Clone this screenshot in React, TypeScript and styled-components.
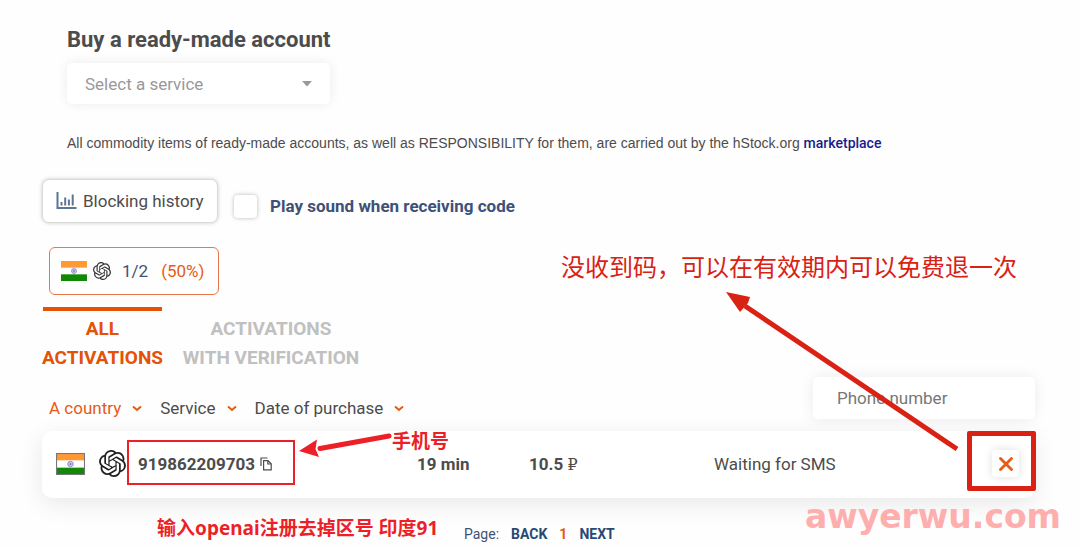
import React from "react";
import styled, { createGlobalStyle } from "styled-components";
import { SiOpenai } from "react-icons/si";

const orange = "#e65a14";
const ink = "#4c4c4c";
const navy = "#3f5176";
const red = "#ed1f27";
const deepRed = "#d92114";

const GlobalStyle = createGlobalStyle`
  *, *::before, *::after { box-sizing: border-box; }
  body { margin: 0; background: #fefefe; }
  body, button, input, select {
    font-family: Roboto, "Noto Sans CJK SC", sans-serif;
    color: ${ink};
  }
  button, input, select { font-size: 17px; }
  button { cursor: pointer; }
`;

const Page = styled.main`
  position: relative;
  padding: 24px 45px 0 42px;
  overflow: hidden;
`;

const Shop = styled.section`
  padding-left: 25px;
`;

const Title = styled.h1`
  margin: 0 0 8px;
  font-size: 22px;
  line-height: 31px;
  font-weight: 700;
`;

const SelectWrap = styled.div`
  display: grid;
  width: 263px;
  align-items: center;
  background: #fff;
  border-radius: 5px;
  box-shadow: 0 0 12px rgba(0, 0, 0, 0.08);
  > * { grid-area: 1 / 1; }
  svg { justify-self: end; margin-right: 18px; pointer-events: none; }
`;

const ServiceSelect = styled.select`
  appearance: none;
  width: 100%;
  height: 41px;
  padding: 0 18px;
  border: 0;
  background: transparent;
  color: #999;
`;

const Notice = styled.p`
  margin: 28px 0 0;
  font-family: "Liberation Sans", sans-serif;
  font-size: 14px;
  line-height: 22px;
`;

const MarketLink = styled.a`
  color: #1b1b8e;
  font-family: Roboto, sans-serif;
  font-weight: 500;
  text-decoration: none;
`;

const Toolbar = styled.div`
  display: flex;
  align-items: center;
  gap: 16px;
  margin-top: 25px;
`;

const HistoryButton = styled.button`
  display: flex;
  align-items: center;
  gap: 6px;
  width: 176px;
  height: 44px;
  padding: 0 13px;
  border: 1px solid #d9d9d9;
  border-radius: 7px;
  background: #fff;
  box-shadow: 0 0 4px rgba(0, 0, 0, 0.2);
  white-space: nowrap;
`;

const SoundLabel = styled.label`
  display: flex;
  align-items: center;
  gap: 13px;
  padding-top: 10px;
  color: ${navy};
  font-size: 17px;
  font-weight: 700;
`;

const Checkbox = styled.input`
  appearance: none;
  width: 23px;
  height: 23px;
  margin: 0;
  border-radius: 4px;
  background: #fff;
  box-shadow: 0 0 4px rgba(0, 0, 0, 0.28);
`;

const StatBadge = styled.div`
  display: flex;
  align-items: center;
  gap: 6px;
  width: 170px;
  height: 48px;
  margin: 24px 0 0 7px;
  padding: 0 11px;
  border: 1px solid #e9774a;
  border-radius: 6px;
  color: ${navy};
  font-size: 17px;
`;

const Ratio = styled.span`
  padding: 0 7px 0 5px;
`;

const Percent = styled.span`
  color: ${orange};
`;

const Tabs = styled.nav`
  display: flex;
  gap: 21px;
  margin: 12px 0 0 1px;
`;

const Tab = styled.button<{ $active?: boolean; $width: number }>`
  display: flex;
  flex-direction: column;
  align-items: center;
  width: ${(p) => p.$width}px;
  padding: 3px 0 0;
  border: 0;
  border-top: 4px solid ${(p) => (p.$active ? "#e35205" : "transparent")};
  background: none;
  color: ${(p) => (p.$active ? "#e35205" : "#c0c0c0")};
  font-size: 19px;
  line-height: 29px;
  font-weight: 700;
  white-space: nowrap;
`;

const Filters = styled.div`
  display: flex;
  align-items: flex-end;
  margin-top: 5px;
  padding-left: 7px;
`;

const Sort = styled.button<{ $active?: boolean }>`
  display: flex;
  align-items: center;
  gap: 11px;
  margin-right: 18px;
  padding: 0;
  border: 0;
  background: none;
  color: ${(p) => (p.$active ? orange : ink)};
  line-height: 22px;
  white-space: nowrap;
`;

const PhoneInput = styled.input`
  width: 222px;
  height: 42px;
  margin-left: auto;
  padding: 0 24px;
  border: 0;
  border-radius: 5px;
  background: #fff;
  box-shadow: 0 0 14px rgba(0, 0, 0, 0.08);
  &::placeholder { color: #777; }
`;

const Activations = styled.table`
  width: 100%;
  margin-top: 12px;
  border-collapse: collapse;
  table-layout: fixed;
  border-radius: 10px;
  background: #fff;
  box-shadow: 0 6px 24px rgba(0, 0, 0, 0.09);
`;

const Cell = styled.td<{ $width?: number; $bold?: boolean }>`
  width: ${(p) => (p.$width ? `${p.$width}px` : "auto")};
  height: 67px;
  padding: 0 0 2px;
  font-size: 17px;
  font-weight: ${(p) => (p.$bold ? 700 : 400)};
`;

const Account = styled.div`
  display: flex;
  align-items: center;
  gap: 14px;
  padding-left: 14px;
`;

const NumberGroup = styled.span`
  display: flex;
  align-items: center;
  gap: 5px;
  margin-left: -2px;
`;

const IconButton = styled.button`
  display: flex;
  padding: 0;
  border: 0;
  background: none;
`;

const Ruble = styled.span`
  font-family: "DejaVu Serif", serif;
  font-size: 16px;
  font-weight: 400;
`;

const CancelButton = styled.button`
  display: grid;
  place-items: center;
  width: 27px;
  height: 27px;
  margin-left: 16px;
  padding: 0;
  border: 0;
  border-radius: 4px;
  background: #fff;
  box-shadow: 0 0 10px rgba(0, 0, 0, 0.13);
`;

const Pager = styled.nav`
  display: flex;
  align-items: center;
  gap: 12px;
  margin-top: 25px;
  padding-left: 422px;
  font-size: 14px;
  line-height: 22px;
  color: ${navy};
`;

const PagerLink = styled.a<{ $current?: boolean }>`
  color: ${(p) => (p.$current ? orange : "#284a72")};
  font-weight: 700;
  text-decoration: none;
`;

const Note = styled.p<{ $top: number; $left?: number; $right?: number; $large?: boolean }>`
  position: absolute;
  top: ${(p) => p.$top}px;
  left: ${(p) => (p.$left === undefined ? "auto" : `${p.$left}px`)};
  right: ${(p) => (p.$right === undefined ? "auto" : `${p.$right}px`)};
  margin: 0;
  font-family: "Noto Sans", "Noto Sans CJK SC", sans-serif;
  font-size: ${(p) => (p.$large ? 24 : 19)}px;
  line-height: 28px;
  font-weight: ${(p) => (p.$large ? 400 : 700)};
  color: ${(p) => (p.$large ? deepRed : red)};
  white-space: nowrap;
`;

const PhoneFrame = styled.div`
  position: absolute;
  top: 440px;
  left: 127px;
  width: 168px;
  height: 45px;
  border: 2px solid ${red};
  pointer-events: none;
`;

const CancelFrame = styled.div`
  position: absolute;
  top: 431px;
  right: 44px;
  width: 69px;
  height: 60px;
  border: 5px solid ${deepRed};
  border-radius: 2px;
  pointer-events: none;
`;

const PhoneArrow = styled.svg`
  position: absolute;
  top: 430px;
  left: 298px;
  pointer-events: none;
`;

const CancelArrow = styled.svg`
  position: absolute;
  top: 288px;
  right: 115px;
  pointer-events: none;
`;

const Watermark = styled.div`
  position: absolute;
  top: 497px;
  right: 19px;
  color: #ffaeae;
  font-family: "DejaVu Sans", sans-serif;
  font-size: 33px;
  line-height: 40px;
  font-weight: 700;
`;

const Flag = ({ width, height, outlined }: { width: number; height: number; outlined?: boolean }) => (
  <svg width={width} height={height} viewBox="0 0 27 21" preserveAspectRatio="none" role="img" aria-label="India">
    <rect width="27" height="21" fill="#fff" />
    <rect width="27" height="7" fill="#ff9933" />
    <rect y="14" width="27" height="7" fill="#128807" />
    <circle cx="13.5" cy="10.5" r="2.6" fill="#c9c9ea" stroke="#7474c4" strokeWidth="0.7" />
    <circle cx="13.5" cy="10.5" r="0.8" fill="#5555b0" />
    {outlined && <rect x="0.5" y="0.5" width="26" height="20" fill="none" stroke="#777" />}
  </svg>
);

const ChartIcon = () => (
  <svg width="21" height="18" viewBox="0 0 21 18" fill="none" stroke="#5c7595" aria-hidden="true">
    <path d="M1.5 0V16H20.5" strokeWidth="2" />
    <path d="M5.5 13.5V10M9.2 13.5V5.5M12.9 13.5V7.5M16.7 13.5V2.5" strokeWidth="2" />
  </svg>
);

const Chevron = () => (
  <svg width="10" height="7" viewBox="0 0 10 7" fill="none" stroke={orange} strokeWidth="2" aria-hidden="true">
    <path d="M1 1.5 5 5 9 1.5" />
  </svg>
);

const CopyIcon = () => (
  <svg width="12" height="14" viewBox="0 0 12 14" fill="none" stroke="#4c4c4c" strokeWidth="1.2" aria-hidden="true">
    <path d="M1 9V1H7.5" />
    <path d="M3.6 3.6H8L11.2 6.8V12.8H3.6ZM7.8 3.6V7H11.2" />
  </svg>
);

export default function App() {
  return (
    <>
      <GlobalStyle />
      <Page>
        <Shop>
          <Title>Buy a ready-made account</Title>
          <SelectWrap>
            <ServiceSelect aria-label="Service">
              <option>Select a service</option>
            </ServiceSelect>
            <svg width="10" height="6" viewBox="0 0 10 6" aria-hidden="true">
              <path d="M0 0H10L5 5.5Z" fill="#999" />
            </svg>
          </SelectWrap>
          <Notice>
            All commodity items of ready-made accounts, as well as RESPONSIBILITY for them, are carried out by the
            hStock.org <MarketLink href="#marketplace">marketplace</MarketLink>
          </Notice>
        </Shop>

        <Toolbar>
          <HistoryButton type="button">
            <ChartIcon />
            Blocking history
          </HistoryButton>
          <SoundLabel>
            <Checkbox type="checkbox" />
            Play sound when receiving code
          </SoundLabel>
        </Toolbar>

        <StatBadge>
          <Flag width={26} height={20} />
          <SiOpenai size={18} color="#333" />
          <Ratio>1/2</Ratio>
          <Percent>(50%)</Percent>
        </StatBadge>

        <Tabs>
          <Tab type="button" $active $width={119}>
            <span>ALL</span>
            <span>ACTIVATIONS</span>
          </Tab>
          <Tab type="button" $width={176}>
            <span>ACTIVATIONS</span>
            <span>WITH VERIFICATION</span>
          </Tab>
        </Tabs>

        <Filters>
          <Sort type="button" $active>
            A country <Chevron />
          </Sort>
          <Sort type="button">
            Service <Chevron />
          </Sort>
          <Sort type="button">
            Date of purchase <Chevron />
          </Sort>
          <PhoneInput type="tel" placeholder="Phone number" aria-label="Phone number" />
        </Filters>

        <Activations>
          <tbody>
            <tr>
              <Cell $width={375} $bold>
                <Account>
                  <Flag width={29} height={22} outlined />
                  <SiOpenai size={27} color="#222" />
                  <NumberGroup>
                    919862209703
                    <IconButton type="button" aria-label="Copy number">
                      <CopyIcon />
                    </IconButton>
                  </NumberGroup>
                </Account>
              </Cell>
              <Cell $width={112} $bold>19 min</Cell>
              <Cell $width={185} $bold>
                10.5 <Ruble>₽</Ruble>
              </Cell>
              <Cell>Waiting for SMS</Cell>
              <Cell $width={59}>
                <CancelButton type="button" aria-label="Cancel activation">
                  <svg width="14" height="14" viewBox="0 0 14 14" stroke={orange} strokeWidth="2.8" strokeLinecap="round">
                    <path d="M1.5 1.5 12.5 12.5M12.5 1.5 1.5 12.5" />
                  </svg>
                </CancelButton>
              </Cell>
            </tr>
          </tbody>
        </Activations>

        <Pager aria-label="Pagination">
          <span>Page:</span>
          <PagerLink href="#back">BACK</PagerLink>
          <PagerLink href="#1" $current>1</PagerLink>
          <PagerLink href="#next">NEXT</PagerLink>
        </Pager>

        <Note $top={253} $right={63} $large>没收到码，可以在有效期内可以免费退一次</Note>
        <Note $top={427} $left={392}>手机号</Note>
        <Note $top={514} $left={157}>输入openai注册去掉区号 印度91</Note>
        <PhoneFrame />
        <CancelFrame />
        <PhoneArrow width="94" height="34" viewBox="0 0 94 34" aria-hidden="true">
          <path d="M91 6 22 18.500" stroke={red} strokeWidth="5" strokeLinecap="round" />
          <path d="M1 21 19 9.500 17.500 19 21 27Z" fill={red} />
        </PhoneArrow>
        <CancelArrow width="246" height="166" viewBox="0 0 246 166" aria-hidden="true">
          <path d="M238 161 26 18" stroke={deepRed} strokeWidth="5" />
          <path d="M7 4 31 9 29 15 21 24Z" fill={deepRed} />
        </CancelArrow>
        <Watermark>awyerwu.com</Watermark>
      </Page>
    </>
  );
}
